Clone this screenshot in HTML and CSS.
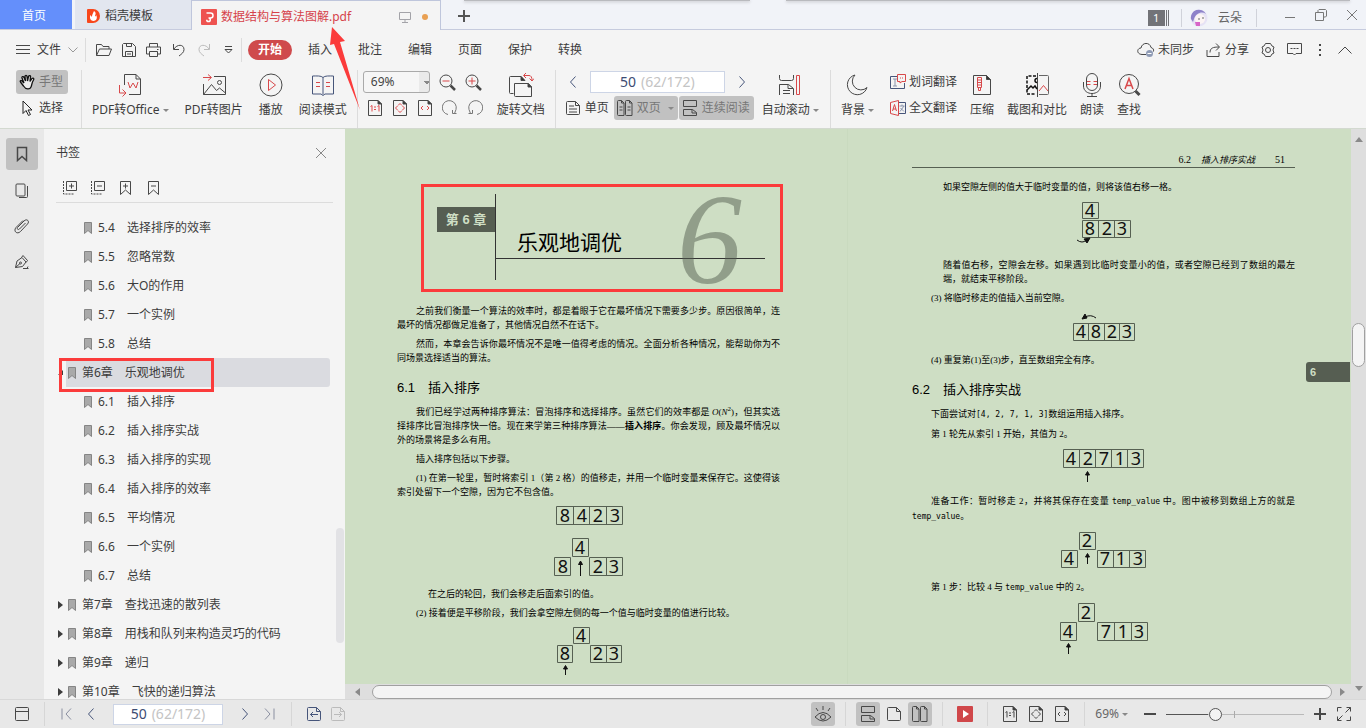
FILE: index.html
```html
<!DOCTYPE html>
<html lang="zh-CN">
<head>
<meta charset="utf-8">
<title>数据结构与算法图解.pdf</title>
<link rel="stylesheet" href="styles.css">
</head>
<body>
<svg class="defs" aria-hidden="true">
  <symbol id="mark" viewBox="0 0 8 12"><path d="M.5.5h7v11L4 8.500l-3.500 3z" fill="#a9a9a9" stroke="#858585"/></symbol>
  <symbol id="chev-l" viewBox="0 0 8 14"><path d="M6.500 1.500 1.500 7l5 5.500"/></symbol>
  <symbol id="chev-r" viewBox="0 0 8 14"><path d="m1.500 1.500 5 5.500-5 5.500"/></symbol>
  <symbol id="doc" viewBox="0 0 16 16"><path d="M1.500 2.500a1 1 0 0 1 1-1h8l4 4v8a1 1 0 0 1-1 1h-11a1 1 0 0 1-1-1zM10.500 1.500v4h4"/></symbol>
  <symbol id="actual" viewBox="0 0 16 16"><path d="M1.500.5h9.500l3.500 3.500v11.500h-13z"/><path d="M11 .5V4h3.500z" fill="#333"/><path class="mid" d="m3.500 6.500 1.500-1v6M10.500 6.500l1.500-1v6M7 7h2M7 9.500h2"/></symbol>
  <symbol id="fitpage" viewBox="0 0 16 16"><path d="M1.500.5h9.500l3.500 3.500v11.500h-13z"/><path d="M11 .5V4h3.500z" fill="#333"/><path class="mid" d="m6 5.500 2-2 2 2M6 10.500l2 2 2-2M5.500 6l-2 2 2 2M10.500 6l2 2-2 2"/></symbol>
  <symbol id="fitwidth" viewBox="0 0 16 16"><path d="M1.500.5h9.500l3.500 3.500v11.500h-13z"/><path d="M11 .5V4h3.500z" fill="#333"/><path class="mid" d="m6 6-2 2 2 2M10 6l2 2-2 2"/></symbol>
  <symbol id="two" viewBox="0 0 16 16"><path d="M1.500.5h3l2.500 2.500v12.500H1.500a1 1 0 0 1-1-1v-13a1 1 0 0 1 1-1zM9.500.5h3l2.500 2.500v12.500H9.500a1 1 0 0 1-1-1v-13a1 1 0 0 1 1-1z"/><path d="M4.500.5V3H7M12.500.5V3H15"/></symbol>
  <symbol id="cont" viewBox="0 0 16 16"><path d="M1.500.5v6h13v-6zM1.500 15.500v-6h9l4 3v3zM10 9.500v3.500h4.500"/></symbol>
</svg>

<header class="titlebar">
  <i class="shade shade-a"></i><i class="shade shade-b"></i>
  <nav class="doctabs">
    <button class="home">首页</button>
    <button class="doctab tpl"><svg class="flat" width="14" height="16" viewBox="0 0 14 16"><path d="M1 1h5a7 7 0 0 1 0 14H1a1 1 0 0 1-1-1V2a1 1 0 0 1 1-1z" fill="#f8471c"/><path d="M7 3c3 2 1 4 1 5s1 0 1-1c2 3 0 6-2.500 6S2 10 3.500 7c.5 1 1 2 1.500 1.500C5 7 6 5 7 3z" fill="#fff"/></svg>稻壳模板</button>
    <button class="doctab current"><svg class="flat" width="16" height="16"><rect width="16" height="16" rx="1" fill="#ee5350"/><path d="M5.500 4h4a2.500 2.500 0 0 1 0 5H7.500M7.500 9a1.800 1.800 0 1 1-1.800 1.800" fill="none" stroke="#fff" stroke-width="1.500"/></svg><span>数据结构与算法图解.pdf</span><svg class="screen" width="12" height="12"><path d="M.5 1.500h11v7H.5zM6 8.500v2.500M3 11.500h6" fill="none" stroke="#a3a3a8"/></svg><i class="dot"></i></button>
    <button class="plus" aria-label="新建"><svg width="12" height="12"><path d="M6 0v12M0 6h12" stroke="#555" stroke-width="2"/></svg></button>
  </nav>
  <div class="winctl">
    <span class="count">1</span><span class="sep"></span>
    <svg class="flat" width="18" height="18"><circle cx="9" cy="9" r="8.500" fill="#e6e2f5"/><path d="M1 10A8 8 0 0 1 16 5C12 2 6 4 4 10l-1 3z" fill="#8e82c9"/><circle cx="10" cy="10" r="5" fill="#fbf4f4"/><path d="M5 13h5v4H6z" fill="#d765c8"/><circle cx="9" cy="10" r="1" fill="#999"/><circle cx="13" cy="9" r="1" fill="#999"/></svg>
    <span class="user">云朵</span><span class="sep"></span>
    <button aria-label="最小化"><svg width="12" height="12"><path d="M1 8.500h10"/></svg></button>
    <button aria-label="还原"><svg width="12" height="12"><path d="M.5 3.500h8v8h-8zM3 3.500V1.500l1-1h6.500l1 1V7l-1 1H8.500"/></svg></button>
    <button aria-label="关闭"><svg width="12" height="12"><path d="m1 1 10 10M11 1 1 11"/></svg></button>
  </div>
</header>

<nav class="menubar">
  <button class="file"><svg width="14" height="12"><path d="M0 1.500h14M0 5.500h14M0 9.500h14"/></svg>文件<svg width="10" height="6"><path d="m.5.5 4.500 4.500L9.500.5" stroke="#999"/></svg></button>
  <span class="sep"></span>
  <div class="quick">
    <button aria-label="打开"><svg width="17" height="14"><path d="M1.500 12.500v-11h5l1.500 2h6v2.500M1.500 12.500l3-6.500h12l-2.500 6.500z"/></svg></button>
    <button aria-label="保存"><svg width="14" height="14"><path d="M1.500.5h9l3 3v10H.5v-12zM3.500 13.500v-5h7v5M4.500.5v3h5v-3M5 11h4"/></svg></button>
    <button aria-label="打印"><svg width="15" height="14"><path d="M3.500 4V.5h8V4M3.500 11H.5V4h14v7h-3M3.500 8.500h8v5h-8zM11 6.500h1.500"/></svg></button>
    <button aria-label="撤销"><svg width="14" height="14"><path d="M1.500 1v5.500H7M2 6C5 1 12 1 12 6.500c0 3-2.500 4.500-5 6.500"/></svg></button>
    <button aria-label="重做"><svg width="14" height="14"><path d="M12.500 1v5.500H7M12 6C9 1 2 1 2 6.500c0 3 2.500 4.500 5 6.500" stroke="#bbb"/></svg></button>
    <button aria-label="更多"><svg width="9" height="10"><path d="M1 1.500h7M1 4.500 4.500 8 8 4.500z"/></svg></button>
  </div>
  <span class="sep"></span>
  <div class="tabs">
    <button class="on">开始</button><button>插入</button><button>批注</button><button>编辑</button><button>页面</button><button>保护</button><button>转换</button>
  </div>
  <div class="tools">
    <button><svg width="18" height="15"><path d="M9 12.500H5C-1 12 0 6 4 6 5 0 13 0 14 5.500c2 .5 3 2 2.500 4"/><circle cx="12.500" cy="11.500" r="3.500" fill="#8f9bb5" stroke="none"/><path d="M10.500 11.500h4" stroke="#fff"/></svg>未同步</button>
    <button><svg width="16" height="14"><path d="M1 7v6.500h12V9M4 9.500C4 5 7 4 13 4M10 .5 13.500 4 10 7.500"/></svg>分享</button>
    <button aria-label="设置"><svg width="14" height="14"><path d="M4.500.5h5L11 3l2 1-1 3 1 3-2 1-1.500 2.500h-5L3 11l-2-1 1-3-1-3 2-1z"/><circle cx="7" cy="7" r="2.500"/></svg></button>
    <button aria-label="反馈"><svg width="15" height="13"><path d="M.5.5h14v10H9L7.500 12 6 10.500H.5z"/><path d="M3.500 5.500h2M6.500 5.500h2M9.500 5.500h2"/></svg></button>
    <button aria-label="更多选项"><svg width="4" height="14"><path d="M1 2h2M1 7h2M1 12h2" stroke-width="2"/></svg></button>
    <button aria-label="收起"><svg width="14" height="8"><path d="m.5 7.500 6.500-6.500 6.500 6.500"/></svg></button>
  </div>
</nav>

<section class="ribbon">
  <div class="stack modes">
    <button class="small active"><svg width="17" height="17"><path d="M4.500 12 1.500 8c-1-1.500 1-2 2-.5L5 9 3 4c-.5-1.500 1.500-2 2-.5L6.500 7 6 2.500C6 1 8 1 8 2.500L8.500 7l1-4.500C10 1 12 1.500 11.500 3L11 7.500l2-3c1-1 2.500 0 1.500 1.500-2 3-1.500 5-2.500 7-1 2.500-5 3-7.500-1z" fill="#eee" stroke="#111" stroke-width="1.300"/></svg>手型</button>
    <button class="small"><svg width="17" height="17"><path d="M4 1v12.500l3-3 2.500 5 2-1L9 10h4z" stroke="#222"/></svg>选择</button>
  </div>
  <span class="sep"></span>
  <div class="group">
    <button class="big"><svg width="24" height="26" viewBox="0 0 24 26"><path d="M6.500 13V2.500H18l4.500 4.500v15.500H11M18 2.500V7h4.500"/><path class="r" d="m10 10 2 6 3-5 3 5 2-6M1.500 13v8h6M4.500 17.500 8 21l-3.500 3.500"/></svg><span>PDF转Office<i class="car"></i></span></button>
    <button class="big"><svg width="24" height="26" viewBox="0 0 24 26"><path d="M1.500 12v10.500h22v-18H12M1.500 22.500l8-10 5 6 3-2.500 6 5"/><circle cx="17.500" cy="10.500" r="2"/><path class="r" d="M1 5.500h8M6 2.500l3.500 3L6 8.500"/></svg><span>PDF转图片</span></button>
    <button class="big"><svg width="24" height="26" viewBox="0 0 24 26"><circle cx="12" cy="13" r="11"/><path class="r" d="M9.500 7.500v11l7-5.500z"/></svg><span>播放</span></button>
    <button class="big"><svg width="24" height="26" viewBox="0 0 24 26"><path stroke="#46557a" d="M12 5.500c-2-2-6-1.500-10.500-1.500v18H10l2 1.500 2-1.500h8.500V4c-4.500 0-8.500-.5-10.500 1.500zM12 5.500v17"/><path class="r" d="M5 10.500h4M5 14.500h4M15 10.500h4M15 14.500h4"/></svg><span>阅读模式</span></button>
  </div>
  <span class="sep"></span>
  <div class="stack zoomers">
    <div class="line"><select aria-label="缩放"><option>69%</option></select>
      <button aria-label="缩小"><svg width="17" height="17"><circle cx="7" cy="7" r="6"/><path d="m11.500 11.500 4.500 4.500" stroke-width="2.500"/><path class="r" d="M3.500 7h7"/></svg></button>
      <button aria-label="放大"><svg width="17" height="17"><circle cx="7" cy="7" r="6"/><path d="m11.500 11.500 4.500 4.500" stroke-width="2.500"/><path class="r" d="M3.500 7h7M7 3.500v7"/></svg></button></div>
    <div class="line views">
      <button aria-label="实际大小"><svg width="16" height="16"><use href="#actual"/></svg></button>
      <button aria-label="适合页面"><svg width="16" height="16"><use href="#fitpage"/></svg></button>
      <button aria-label="适合宽度"><svg width="16" height="16"><use href="#fitwidth"/></svg></button>
      <button aria-label="顺时针旋转"><svg width="16" height="16"><path d="M6 14.500A7 7 0 1 1 14 9.500l-1.500 4M14.500 13.500h-4v-3.500" stroke="#777"/></svg></button>
      <button aria-label="逆时针旋转"><svg width="16" height="16"><path d="M10 14.500A7 7 0 1 0 2 9.500l1.500 4M1.500 13.500h4v-3.500" stroke="#777"/></svg></button>
    </div>
  </div>
  <button class="big rotate"><svg width="26" height="26" viewBox="0 0 26 26"><path d="M5.500 21.500h-3a1 1 0 0 1-1-1v-15a1 1 0 0 1 1-1H13l3.500 4M6.500 11.500h14l3 3.500v9.500h-16a1 1 0 0 1-1-1z"/><path d="M13 4.500v4h4zM20 11.500V15h3.500z" fill="#333"/><path class="r" d="M16 3.500h5q3 0 3 5M18 1l-2.500 2.500L18 6M21.500 6.500 24 9l2-2.500"/></svg><span>旋转文档</span></button>
  <span class="sep"></span>
  <div class="stack paging">
    <div class="line"><button aria-label="上一页"><svg class="nav" width="8" height="14"><use href="#chev-l"/></svg></button>
      <label class="pageno"><input value="50" aria-label="页码"><span>(62/172)</span></label>
      <button aria-label="下一页"><svg class="nav" width="8" height="14"><use href="#chev-r"/></svg></button></div>
    <div class="line">
      <button class="small"><svg width="16" height="16"><use href="#doc"/><path d="M4 6h5M4 9h8M4 12h8"/></svg>单页</button>
      <button class="small active"><svg width="16" height="16"><use href="#two"/><path d="M2.500 7h3M2.500 10h3M10.500 7h3M10.500 10h3"/></svg>双页<i class="car"></i></button>
      <button class="small active"><svg width="16" height="16"><use href="#cont"/></svg>连续阅读</button>
    </div>
  </div>
  <button class="big scroll"><svg width="24" height="26" viewBox="0 0 24 26"><path d="M1.500 3v3.500q0 2 2 2h10q2 0 2-2V3M1.500 23V12.500h9l5 4V23M10 12.500v4h5M5 18.500h7M5 21.500h7"/><path d="M18.500 3.500h3v19h-3z" class="r"/></svg><span>自动滚动<i class="car"></i></span></button>
  <span class="sep"></span>
  <div class="group last">
    <button class="big"><svg width="24" height="26" viewBox="0 0 24 26"><path d="M10 3A10 10 0 1 0 22 15.500 8 8 0 0 1 10 3z"/></svg><span>背景<i class="car"></i></span></button>
    <div class="stack">
      <button class="small"><svg width="16" height="16"><path d="M7 2.500H.5v12h14V9" stroke="#46557a"/><path d="M3 5h4M3 12h4M5 5v7" stroke="#8a94ad"/><path class="r" d="M7.500.5h8v7H12L10 9V7.500H7.500zM10 4h1M12 4h1"/></svg>划词翻译</button>
      <button class="small"><svg width="16" height="16"><path d="M9 2.500h6.500v11H9" stroke="#46557a"/><path d="M9.500 6h5M12 4.500V6M10 11.500 14 6M10.500 8l3.500 3.500" stroke="#8a94ad"/><path class="r" d="M.5 2.500 8.500.5v15l-8-2zM2.500 11 4.500 4.500l2 6.500M3 9h3"/></svg>全文翻译</button>
    </div>
    <button class="big"><svg width="20" height="26" viewBox="0 0 20 26"><path d="M1.500 3.500h13l4 4v15h-17z"/><path d="M14.500 3.500v4h4z" fill="#333"/><path class="r" d="M5.500 5.500h4v10h-4zM6.500 15.500v3h2v-3M5.500 8h4M5.500 10.500h4M5.500 13h4"/></svg><span>压缩</span></button>
    <button class="big"><svg width="24" height="26" viewBox="0 0 24 26"><path d="M11 4H2v18h9" stroke="#111" stroke-width="1.500" stroke-dasharray="3 1.500"/><path d="M14 3.500h8.500q1 0 1 1v17q0 1-1 1H14" stroke="#666"/><path d="M12.500 1v24"/><path d="m2 18 4-4 2 2 2-2 2 3M12 6.500a2 2 0 1 0 0 4" stroke="#111" stroke-width="1.500"/><path class="r" d="m14 19 4.500-5.500L23 19"/></svg><span>截图和对比</span></button>
    <button class="big"><svg width="24" height="26" viewBox="0 0 24 26"><rect x="6.500" y="1.500" width="11" height="17" rx="5.500"/><path d="M3.500 10v4c0 10 17 10 17 0v-4M12 21.500V24M7 24.500h10"/><path class="r" d="M7 9.500h3.500M13.500 9.500H17M7 12.500h3.500M13.500 12.500H17"/></svg><span>朗读</span></button>
    <button class="big"><svg width="24" height="26" viewBox="0 0 24 26"><circle cx="12" cy="12" r="9.500"/><path d="m18.500 19 4 4" stroke-width="3"/><path class="r" stroke-width="1.500" d="m8 17 4-10.500L16 17M9.500 13.500h5"/></svg><span>查找</span></button>
  </div>
</section>

<main>
  <aside class="rail">
    <button class="active" aria-label="书签"><svg width="12" height="16"><path d="M1.500 1.500h9v13L6 10.500l-4.500 4z" stroke-width="1.500"/></svg></button>
    <button aria-label="缩略图"><svg width="14" height="15"><rect x="1" y="1" width="9" height="12" rx="1"/><path d="M12.500 3v10.500q0 1-1 1H4"/></svg></button>
    <button aria-label="附件"><svg width="16" height="16"><path d="m11.500 5-6 6c-1.500 1.500-3-.5-2-1.500L10 3c3-3 6 .5 3.500 3l-7 7.500C3 17-1 13 2 9.500l7-7"/></svg></button>
    <button aria-label="签名"><svg width="16" height="16"><path d="M1.500 13.500 3 7l5-3.500 4 4.500-3.500 4.500zM1.500 13.500 6 9.500M7.500 3.500 9 1.500l4.500 5-1.500 2M9 14.500h4l1-2M12 14.500h2.500"/><circle cx="6.500" cy="9" r="1"/></svg></button>
  </aside>

  <aside class="pane">
    <div class="panehead"><h2>书签</h2><button aria-label="关闭面板"><svg width="12" height="12"><path d="m1 1 10 10M11 1 1 11" stroke="#888"/></svg></button></div>
    <div class="panetools">
      <button aria-label="全部展开"><svg width="16" height="16"><path d="M4.500 1.500h10v9h-10zM7 6h5M9.500 3.500v5"/><path d="M1.500 1v13h11" stroke-dasharray="2 1"/></svg></button>
      <button aria-label="全部收起"><svg width="16" height="16"><path d="M4.500 1.500h10v9h-10zM7 6h5"/><path d="M1.500 1v13h11" stroke-dasharray="2 1"/></svg></button>
      <button aria-label="添加书签"><svg width="16" height="16"><path d="M2.500 1.500h10v13l-5-4.500-5 4.500zM5 6h5M7.500 3.500v5"/></svg></button>
      <button aria-label="删除书签"><svg width="16" height="16"><path d="M2.500 1.500h10v13l-5-4.500-5 4.500zM5 6h5"/></svg></button>
    </div>
    <ul class="tree">
      <li class="sub"><svg width="8" height="12"><use href="#mark"/></svg>5.4　选择排序的效率</li>
      <li class="sub"><svg width="8" height="12"><use href="#mark"/></svg>5.5　忽略常数</li>
      <li class="sub"><svg width="8" height="12"><use href="#mark"/></svg>5.6　大O的作用</li>
      <li class="sub"><svg width="8" height="12"><use href="#mark"/></svg>5.7　一个实例</li>
      <li class="sub"><svg width="8" height="12"><use href="#mark"/></svg>5.8　总结</li>
      <li class="open"><svg class="tri" width="5" height="5"><path d="M5 0v5H0z"/></svg><svg width="8" height="12"><use href="#mark"/></svg>第6章　乐观地调优</li>
      <li class="sub"><svg width="8" height="12"><use href="#mark"/></svg>6.1　插入排序</li>
      <li class="sub"><svg width="8" height="12"><use href="#mark"/></svg>6.2　插入排序实战</li>
      <li class="sub"><svg width="8" height="12"><use href="#mark"/></svg>6.3　插入排序的实现</li>
      <li class="sub"><svg width="8" height="12"><use href="#mark"/></svg>6.4　插入排序的效率</li>
      <li class="sub"><svg width="8" height="12"><use href="#mark"/></svg>6.5　平均情况</li>
      <li class="sub"><svg width="8" height="12"><use href="#mark"/></svg>6.6　一个实例</li>
      <li class="sub"><svg width="8" height="12"><use href="#mark"/></svg>6.7　总结</li>
      <li><svg class="tri" width="5" height="8"><path d="m0 0 5 4-5 4z"/></svg><svg width="8" height="12"><use href="#mark"/></svg>第7章　查找迅速的散列表</li>
      <li><svg class="tri" width="5" height="8"><path d="m0 0 5 4-5 4z"/></svg><svg width="8" height="12"><use href="#mark"/></svg>第8章　用栈和队列来构造灵巧的代码</li>
      <li><svg class="tri" width="5" height="8"><path d="m0 0 5 4-5 4z"/></svg><svg width="8" height="12"><use href="#mark"/></svg>第9章　递归</li>
      <li><svg class="tri" width="5" height="8"><path d="m0 0 5 4-5 4z"/></svg><svg width="8" height="12"><use href="#mark"/></svg>第10章　飞快的递归算法</li>
    </ul>
    <i class="panethumb"></i>
  </aside>

  <section class="viewer">
    <div class="pages">
      <article class="page verso">
        <div class="banner">
          <span class="chap">第 6 章</span>
          <div class="stem"><h1>乐观地调优</h1></div>
          <span class="numeral">6</span>
        </div>
        <p><span class="full in">之前我们衡量一个算法的效率时，都是着眼于它在最坏情况下需要多少步。原因很简单，连</span>最坏的情况都做足准备了，其他情况自然不在话下。</p>
        <p><span class="full in">然而，本章会告诉你最坏情况不是唯一值得考虑的情况。全面分析各种情况，能帮助你为不</span>同场景选择适当的算法。</p>
        <h3>6.1　插入排序</h3>
        <p><span class="full in">我们已经学过两种排序算法：冒泡排序和选择排序。虽然它们的效率都是 <i>O</i>(<i>N</i><sup>2</sup>)，但其实选</span><span class="full">择排序比冒泡排序快一倍。现在来学第三种排序算法——<b>插入排序</b>。你会发现，顾及最坏情况以</span>外的场景将是多么有用。</p>
        <p class="in">插入排序包括以下步骤。</p>
        <p><span class="full in">(1) 在第一轮里，暂时将索引 1（第 2 格）的值移走，并用一个临时变量来保存它。这使得该</span>索引处留下一个空隙，因为它不包含值。</p>
        <svg class="fig" width="68" height="19"><path d="M1.500.5h66v18h-66zM18.500.5v18M34.500.5v18M51.500.5v18"/><text y="16" x="10 27 43 60">8423</text></svg>
        <svg class="fig" width="70" height="38"><path d="M18.500.5h16v18h-16zM.5 19.500h16v18H.5zM35.500 19.500h33v18h-33zM52.500 19.500v18"/><path class="ar" d="M26.500 38V24M24.500 26.500l2-3.500 2 3.500z"/><text y="16" x="26">4</text><text y="35" x="9 44 60">823</text></svg>
        <p class="in2">在之后的轮回，我们会移走后面索引的值。</p>
        <p class="in">(2) 接着便是平移阶段，我们会拿空隙左侧的每一个值与临时变量的值进行比较。</p>
        <svg class="fig" width="66" height="48"><path d="M17.500.5h16v16h-16zM1.500 18.500h15v17h-15zM34.500 18.500h31v17h-31zM50.500 18.500v17"/><path class="ar" d="M9.500 48V40M7.500 42l2-3.500 2 3.500z"/><text y="15" x="25">4</text><text y="33" x="9 42 58">823</text></svg>
      </article>

      <article class="page recto">
        <div class="running">6.2　<span>插入排序实战</span>　　51</div>
        <p class="in2">如果空隙左侧的值大于临时变量的值，则将该值右移一格。</p>
        <svg class="fig tall" width="56" height="42"><path d="M6.500.5h16v16h-16zM6.500 18.500h48v17h-48zM22.500 18.500v17M38.500 18.500v17"/><path class="ar curve" d="M1 38q5 4 10 0"/><path class="ar" d="m8 37 6-1-3 5z"/><text y="15" x="14">4</text><text y="33" x="14 31 46">823</text></svg>
        <p class="in2"><span class="full">随着值右移，空隙会左移。如果遇到比临时变量小的值，或者空隙已经到了数组的最左</span>端，就结束平移阶段。</p>
        <p class="in">(3) 将临时移走的值插入当前空隙。</p>
        <svg class="fig" width="62" height="29"><path d="M.5 10.500h61v17H.5zM15.500 10.500v17M31.500 10.500v17M46.500 10.500v17"/><path class="ar curve" d="M23 5q-5-4-11-1"/><path class="ar" d="m9 6 3-5 2 4z"/><text y="25" x="8 23 39 54">4823</text></svg>
        <p class="in">(4) 重复第(1)至(3)步，直至数组完全有序。</p>
        <h3>6.2　插入排序实战</h3>
        <p class="in">下面尝试对<code>[4, 2, 7, 1, 3]</code>数组运用插入排序。</p>
        <p class="in">第 1 轮先从索引 1 开始，其值为 2。</p>
        <svg class="fig" width="82" height="34"><path d="M.5.5h80v18H.5zM16.500.5v18M32.500.5v18M48.500.5v18M64.500.5v18"/><path class="ar" d="M24.500 33V24M22.500 26l2-3.500 2 3.500z"/><text y="16" x="8 25 41 57 73">42713</text></svg>
        <p><span class="full in">准备工作：暂时移走 2，并将其保存在变量 <code>temp_value</code> 中。图中被移到数组上方的就是</span><code>temp_value</code>。</p>
        <svg class="fig" width="86" height="37"><path d="M18.500.5h16v17h-16zM.5 18.500h16v17H.5zM36.500 18.500h48v17h-48zM52.500 18.500v17M68.500 18.500v17"/><path class="ar" d="M26.500 32V23M24.500 25l2-3.500 2 3.500z"/><text y="15" x="26">2</text><text y="33" x="8 44 60 77">4713</text></svg>
        <p class="in">第 1 步：比较 4 与 <code>temp_value</code> 中的 2。</p>
        <svg class="fig" width="88" height="52"><path d="M18.500.5h16v18h-16zM.5 19.500h16v18H.5zM37.500 19.500h50v18h-50zM54.500 19.500v18M71.500 19.500v18"/><path class="ar" d="M8.500 51V42M6.500 44l2-3.500 2 3.500z"/><text y="16" x="26">2</text><text y="35" x="8 46 63 79">4713</text></svg>
        <span class="thumbtab">6</span>
      </article>
    </div>
    <div class="vbar"><svg width="8" height="5"><path d="m0 5 4-5 4 5z"/></svg><i></i><svg width="8" height="5"><path d="m0 0 4 5 4-5z"/></svg></div>
    <div class="hbar"><svg width="5" height="8"><path d="m5 0-5 4 5 4z"/></svg><i></i><svg width="5" height="8"><path d="m0 0 5 4-5 4z"/></svg></div>
  </section>
</main>

<footer class="status">
  <button class="cell" aria-label="侧栏"><svg width="16" height="14"><rect x="1.500" y=".5" width="13" height="13" rx="1"/><path d="M1.500 4.500h13"/></svg></button>
  <span class="sep"></span>
  <div class="pager">
    <button aria-label="首页"><svg class="nav dim" width="11" height="14"><path d="M1 1.500v11M10 1.500 5 7l5 5.500"/></svg></button>
    <button aria-label="上一页"><svg class="nav" width="8" height="14"><use href="#chev-l"/></svg></button>
    <label class="pageno"><input value="50" aria-label="当前页"><span>(62/172)</span></label>
    <button aria-label="下一页"><svg class="nav" width="8" height="14"><use href="#chev-r"/></svg></button>
    <button aria-label="末页"><svg class="nav dim" width="11" height="14"><path d="M10 1.500v11M1 1.500 6 7l-5 5.500"/></svg></button>
  </div>
  <span class="sep"></span>
  <div class="hist">
    <button aria-label="后退"><svg class="nav" width="16" height="16"><use href="#doc"/><path d="M12 8.500H4.500M7 6 4.500 8.500 7 11"/></svg></button>
    <button aria-label="前进"><svg class="nav off" width="16" height="16"><use href="#doc"/><path d="M4 8.500h7.500M9 6l2.500 2.500L9 11"/></svg></button>
  </div>
  <div class="viewctl">
    <button class="tile active" aria-label="护眼模式"><svg width="18" height="18"><path d="M1 12q8-9 16 0-8 8-16 0zM9 5V1M4 6 2 3M14 6l2-3"/><circle cx="9" cy="12" r="2.500"/></svg></button>
    <span class="sep"></span>
    <div class="tiles">
      <button class="tile active" aria-label="连续"><svg width="16" height="16"><use href="#cont"/></svg></button>
      <button class="tile" aria-label="单页"><svg width="16" height="16"><use href="#doc"/></svg></button>
      <button class="tile active" aria-label="双页"><svg width="16" height="16"><use href="#two"/></svg></button>
    </div>
    <span class="sep"></span>
    <button class="tile" aria-label="播放"><svg width="16" height="16"><rect width="16" height="16" rx="1" fill="#d0474a" stroke="none"/><path d="m6 4 6 4-6 4z" fill="#fff" stroke="none"/></svg></button>
    <span class="sep"></span>
    <div class="tiles">
      <button class="tile" aria-label="实际大小"><svg width="16" height="16"><use href="#actual"/></svg></button>
      <button class="tile" aria-label="适合页面"><svg width="16" height="16"><use href="#fitpage"/></svg></button>
      <button class="tile" aria-label="适合宽度"><svg width="16" height="16"><use href="#fitwidth"/></svg></button>
    </div>
    <span class="sep"></span>
    <button class="pct">69%<i class="car"></i></button>
    <button aria-label="缩小"><svg width="12" height="12"><path d="M0 6h12" stroke-width="2"/></svg></button>
    <input class="range" type="range" min="0" max="138" value="47" aria-label="缩放比例">
    <button aria-label="放大"><svg width="12" height="12"><path d="M0 6h12M6 0v12" stroke-width="2"/></svg></button>
    <button aria-label="全屏"><svg width="16" height="16"><path d="M1.500 5.500v-4h4M10.500 1.500h4v4M14.500 10.500v4h-4M5.500 14.500h-4v-4M9.500 6.500l5-5M6.500 9.500l-5 5"/></svg></button>
  </div>
</footer>
<svg class="arrow" width="32" height="84" aria-hidden="true"><path d="m3 0 13 14-5 1 20 68L5 17l-4 1z" fill="#fb3b3b"/></svg>
</body>
</html>
```
FILE: styles.css
```css
* { box-sizing: border-box; }
body {
  margin: 0;
  height: 100vh;
  display: grid;
  grid-template-rows: 30px 38px 61px minmax(0, 1fr) 29px;
  overflow: hidden;
  background: #f4f4f4;
  color: #3c3c3c;
  font: 12px/16px "Noto Sans", "Noto Sans CJK SC", sans-serif;
}
svg { flex: none; fill: none; stroke: #484848; display: block; }
.defs { position: absolute; width: 0; height: 0; }
.flat { stroke: none; }
.r { stroke: #d8484a; }
.mid { stroke: var(--mid, #484848); }
button { border: 0; padding: 0; background: none; color: inherit; font: inherit; display: flex; align-items: center; white-space: nowrap; }
input, select { font: inherit; }
h1, h2, h3, p, ul { margin: 0; padding: 0; font-weight: 400; }
.sep { width: 1px; background: #dcdcdc; flex: none; }
.car { display: inline-block; border: 3px solid transparent; border-top-color: #888; border-bottom: 0; margin-left: 3px; vertical-align: middle; }

/* title bar */
.titlebar { position: relative; display: flex; justify-content: space-between; background: #f1f3f8; border-bottom: 1px solid #c6cbde; }
.shade { position: absolute; top: 0; height: 1px; background: #b9babe; box-shadow: 0 1px 3px #a9aaae; }
.shade-a { left: 464px; width: 286px; }
.shade-b { left: 786px; right: 16px; }
.doctabs { display: flex; position: relative; }
.home { width: 72px; justify-content: center; background: #648ffb; color: #fff; margin-right: 3px; height: 29px; padding: 3px 4px 0 0; }
.doctab { padding: 3px 0 0 12px; gap: 4px; height: 29px; }
.tpl { width: 116px; background: #e2e6ef; }
.current { width: 250px; height: 30px; padding: 2px 12px 0 9px; background: #f4f4f4; border: 1px solid #bfc6dc; border-bottom: 0; color: #d6424a; }
.screen { margin-left: auto; margin-right: 7px; }
.dot { width: 6px; height: 6px; border-radius: 3px; background: #e9a052; }
.plus { width: 46px; justify-content: center; padding-top: 3px; }
.winctl { display: flex; align-items: center; padding: 7px 8px 0 0; position: relative; }
.winctl .sep { height: 18px; margin: 0 8px 0 11px; background: #d0d2da; }
.winctl .sep + svg { margin-right: 10px; }
.winctl button { margin-left: 19px; height: 20px; padding-bottom: 7px; }
.winctl button svg { stroke: #777; }
.user { color: #666; margin-right: 3px; }
.count { width: 22px; height: 16px; background: linear-gradient(90deg, #727378 17px, transparent 17px 18px, #727378 18px 19px, transparent 19px 20px, #727378 20px 21px, transparent 21px); color: #fff; padding-left: 5px; font-size: 11px; }

/* menu row */
.menubar { display: flex; align-items: center; padding: 1px 14px 0 16px; }
.menubar > .sep { height: 24px; }
.file { gap: 7px; margin-right: 7px; }
.quick { display: flex; padding: 0 0 0 5px; }
.quick button { width: 25px; height: 25px; justify-content: center; }
.tabs { display: flex; margin-left: 3px; }
.tabs button { width: 50px; height: 20px; justify-content: center; }
.tabs .on { width: 44px; margin: 0 3px; border-radius: 10px; background: #cf4a4c; color: #fff; font-weight: 700; }
.tools { display: flex; gap: 12px; margin-left: auto; }
.tools button { gap: 3px; }
.tools button:nth-last-child(-n+2) { margin-left: 4px; }

/* ribbon */
.ribbon { display: flex; padding: 2px 16px 0; border-bottom: 1px solid #d3d9d0; }
.ribbon > .sep { height: 58px; }
.stack { display: flex; flex-direction: column; gap: 2px; flex: none; }
.small { height: 24px; gap: 3px; border-radius: 3px; padding: 0 4px 0 3px; }
.active { background: #c1c1c1; border-radius: 3px; }
.small.active { color: #777; }
.modes { margin-right: 13px; }
.modes .small { width: 52px; }
.big { flex-direction: column; gap: 4px; padding-top: 2px; height: 50px; flex: none; }
.group { display: flex; gap: 16px; padding: 0 10px; }
.line { display: flex; align-items: center; height: 24px; gap: 9px; }
.zoomers { padding-left: 5px; width: 124px; }
.zoomers select { width: 70px; height: 22px; border: 1px solid #aaa; border-radius: 3px; padding: 0 4px 0 7px; appearance: none; color: #444;
  background: linear-gradient(#888, #888) 60px 9px / 6px 1px no-repeat, linear-gradient(#888, #888) 61px 10px / 4px 1px no-repeat, linear-gradient(#888, #888) 62px 11px / 2px 1px no-repeat, linear-gradient(90deg, #f6f6f6 55px, #eaeaea 55px); }
.views { padding-left: 4px; --mid: #e0484a; }
.rotate { margin: 0 10px 0 15px; }
.paging { padding-left: 8px; }
.paging .line:first-child { padding-left: 5px; gap: 13px; }
.paging .line:last-child { gap: 1px; }
.paging .small { gap: 4px; }
.paging .small:first-child { padding-left: 1px; }
.nav { stroke: #46557a; }
.dim { stroke: #8a8fa0; }
.off { stroke: #bbb; }
.pageno { display: flex; align-items: center; justify-content: center; gap: 4px; width: 135px; height: 22px; border: 1px solid #cdd5e6; background: #fff; color: #c4c4c4; font-size: 14px; }
.pageno input { width: 17px; border: 0; padding: 0; background: none; color: #3d4c73; }
.scroll { margin: 0 11px 0 8px; }
.last { gap: 13px; }
.last .small { padding-right: 0; }

/* side */
main { display: grid; grid-template-columns: 44px 301px minmax(0, 1fr); min-height: 0; }
.rail { background: #e8e8e8; padding: 9px 6px; display: flex; flex-direction: column; gap: 4px; }
.rail button { width: 32px; height: 32px; justify-content: center; }
.pane { position: relative; display: flex; flex-direction: column; min-height: 0; padding: 16px 12px 0; }
.panehead { display: flex; justify-content: space-between; padding-right: 6px; }
.panehead h2 { font-size: 12px; }
.panetools { display: flex; gap: 12px; height: 42px; padding: 12px 0 0 6px; align-items: center; border-bottom: 1px solid #dcdcdc; }
.tree { list-style: none; flex: 1; min-height: 0; overflow: hidden; padding: 10px 3px 0 0; }
.tree li { display: flex; align-items: center; gap: 6px; height: 29px; padding-left: 12px; position: relative; }
.tree .sub { padding-left: 28px; }
.tri { position: absolute; left: 2px; fill: #3c3c3c; stroke: none; }
.tree .open { background: linear-gradient(90deg, transparent 10px, #dadbe0 10px); border-radius: 3px; }
.open::after { content: ""; position: absolute; left: 3px; top: 0; width: 149px; height: 28px; border: 3px solid #fb3b3b; z-index: 1; }
.panethumb { position: absolute; right: 1px; top: 70%; width: 8px; height: 115px; border-radius: 4px; background: #e2e2e5; }

/* document */
.viewer { display: grid; grid-template-columns: minmax(0, 1fr) 15px; grid-template-rows: minmax(0, 1fr) 15px; background: #dedede; min-height: 0; }
.pages { display: grid; grid-template-columns: 1fr 1fr; background: #cedec4; overflow: hidden; color: #000; font: 9px/14px "Liberation Serif", "Noto Sans CJK SC", serif; }
.page { position: relative; display: flex; flex-direction: column; }
.verso { padding: 55px 67px 0 52px; border-right: 1px solid #c9dabf; }
.recto { padding: 24px 56px 0 64px; }
.page p { margin-bottom: 5px; }
sup { font-size: 7px; line-height: 1px; }
.full { display: block; text-align-last: justify; white-space: nowrap; }
.in { padding-left: 19px; }
.in2 { padding-left: 31px; }
h3 { margin: 8px 0 7px; font: 13px/20px "Liberation Sans", "Noto Sans CJK SC", sans-serif; }
code { font: 8px/14px "DejaVu Sans Mono", monospace; }
.fig { align-self: center; margin: 2px 0 11px; stroke: #566052; overflow: visible; }
.recto .fig { margin-top: 3px; }
.recto .tall { margin-bottom: 14px; }
.fig text { font: 18px "Noto Sans", sans-serif; fill: #111; stroke: none; text-anchor: middle; }
.ar { stroke: #111; fill: #111; }
.curve { fill: none; }
.banner { position: relative; display: grid; grid-template-columns: 58px 1fr; border: 3px solid #fb3b3b; padding: 7px 15px 9px 13px; margin: 0 -3px 12px 24px; }
.chap { margin-top: 13px; height: 25px; background: #565e52; color: #cedec4; text-align: center; font: bold 13px/25px "Liberation Sans", "Noto Sans CJK SC", sans-serif; }
.stem { height: 86px; border-left: 1px solid #333; }
.stem h1 { height: 65px; padding: 35px 0 0 21px; border-bottom: 1px solid #333; font: 21px/28px "Liberation Sans", "Noto Sans CJK SC", sans-serif; }
.numeral { position: absolute; right: 38px; top: -6px; font: italic 130px/116px "Liberation Serif", serif; color: #566052; opacity: .5; }
.running { text-align: right; padding-right: 10px; border-bottom: 1px solid #566052; margin-bottom: 12px; font-size: 10px; }
.running span { font-size: 9px; font-style: italic; }
.thumbtab { position: absolute; right: 1px; top: 233px; width: 44px; height: 20px; border-radius: 3px 0 0 3px; background: #565e52; color: #cedec4; padding-left: 4px; font: bold 11px/20px "Liberation Sans", sans-serif; }
.vbar { display: flex; flex-direction: column; align-items: center; justify-content: space-between; grid-row: 1 / 3; grid-column: 2; padding: 8px 0; position: relative; }
.vbar svg, .hbar svg { fill: #8a8a8a; stroke: none; }
.vbar i, .hbar i { border: 1px solid #a0a0a0; border-radius: 7px; background: #f4f4f4; }
.vbar i { position: absolute; top: 34%; width: 13px; height: 44px; }
.hbar { display: flex; align-items: center; gap: 8px; padding: 0 6px 0 10px; }
.hbar i { flex: 1; height: 14px; }
.hbar svg:first-child { margin-right: 4px; }

/* status bar */
.status { display: flex; align-items: center; background: #e8e8e8; border-top: 1px solid #d8d8d8; padding-right: 14px; }
.status .sep { height: 24px; background: #d6d6d6; }
.status .cell { width: 44px; justify-content: center; }
.pager { display: flex; align-items: center; gap: 15px; padding: 0 16px; }
.pager .pageno { width: 110px; height: 21px; margin: 0 3px; }
.hist { display: flex; gap: 8px; padding-left: 14px; }
.viewctl { display: flex; align-items: center; margin-left: auto; gap: 10px; }
.tile { width: 24px; height: 24px; justify-content: center; }
.tiles { display: flex; gap: 2px; }
.pct { color: #666; margin-right: 6px; }
.range { appearance: none; width: 138px; height: 14px; margin: 0; background: linear-gradient(#aaa, #aaa) 68px 4px / 1px 7px no-repeat, linear-gradient(90deg, #555 42px, #b9b9b9 42px) 0 7px / 100% 1px no-repeat; }
.range::-webkit-slider-thumb { appearance: none; width: 13px; height: 13px; border: 1px solid #555; border-radius: 50%; background: #f4f4f4; }
.arrow { position: absolute; left: 329px; top: 27px; stroke: none; }
```
